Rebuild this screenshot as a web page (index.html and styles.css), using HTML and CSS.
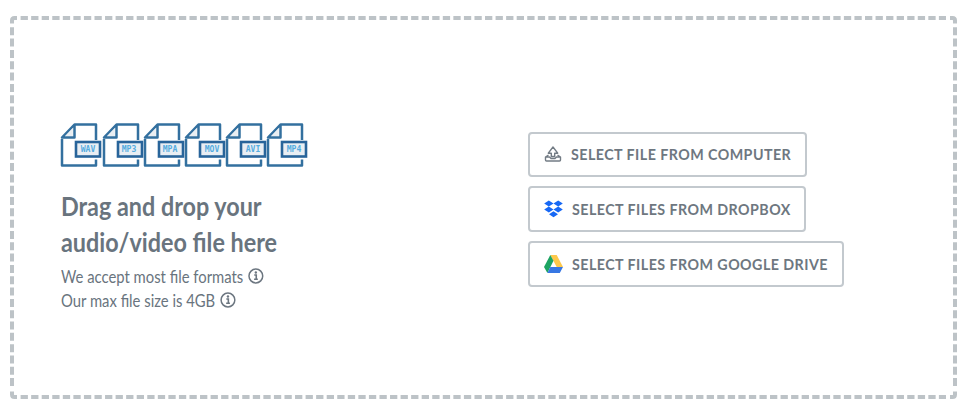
FILE: index.html
```html
<!DOCTYPE html>
<html lang="en">
<head>
<meta charset="utf-8">
<title>Upload</title>
<link rel="stylesheet" href="styles.css">
</head>
<body>
<svg width="0" height="0" class="defs">
  <symbol id="file" viewBox="0 0 42 46">
    <path d="M2 17V43.500H36V37.500M36 18V2.500H14.500L2 15.500H14.500V2.500" fill="none" stroke="#33709f" stroke-width="2.500" stroke-linejoin="round"/>
    <path d="M12.800 6.500V14H5.500Z" fill="#e9eef2"/>
    <rect x="16" y="20" width="24" height="14.500" fill="#e9eef3" stroke="#28649a" stroke-width="2.600"/>
  </symbol>
  <symbol id="info" viewBox="0 0 16 16">
    <circle cx="8" cy="8" r="6.900" fill="none" stroke="#6c7680" stroke-width="1.500"/>
    <path d="M6.400 7H8.400V11M6.200 11.300H10" fill="none" stroke="#6c7680" stroke-width="1.600"/>
    <circle cx="8" cy="4.500" r="1.200" fill="#6c7680"/>
  </symbol>
</svg>
<main class="dropzone">
  <svg class="outline" width="947" height="383" fill="none" stroke="#bdc3c7" stroke-width="4">
    <path d="M10.600 2H936" stroke-dasharray="7.300 3.255"/>
    <path d="M10.600 381H936" stroke-dasharray="7.300 3.255"/>
    <path d="M2 11.300V370.500" stroke-dasharray="8 3.316"/>
    <path d="M945 11.300V370.500" stroke-dasharray="8 3.316"/>
    <path d="M2 7.500V4.500Q2 2 4.500 2H7M940 2H942.500Q945 2 945 4.500V7.500M2 375.500V378.500Q2 381 4.500 381H7M940 381H942.500Q945 381 945 378.500V375.500"/>
  </svg>
  <section class="intro">
    <div class="formats">
      <div class="format"><svg><use href="#file"/></svg><span>WAV</span></div>
      <div class="format"><svg><use href="#file"/></svg><span>MP3</span></div>
      <div class="format"><svg><use href="#file"/></svg><span>MPA</span></div>
      <div class="format"><svg><use href="#file"/></svg><span>MOV</span></div>
      <div class="format"><svg><use href="#file"/></svg><span>AVI</span></div>
      <div class="format"><svg><use href="#file"/></svg><span>MP4</span></div>
    </div>
    <h1>Drag and drop your<br>audio/video file here</h1>
    <p>We accept most file formats <svg class="info"><use href="#info"/></svg></p>
    <p>Our max file size is 4GB <svg class="info"><use href="#info"/></svg></p>
  </section>
  <section class="sources">
    <button class="source computer">
      <svg width="18" height="16" viewBox="0 0 18 16" fill="none" stroke="#737c85" stroke-width="1.400" stroke-linejoin="round"><path d="M4.500 9L1.500 11V14Q1.500 15 2.500 15H15.500Q16.500 15 16.500 14V11L13.500 9M1.500 11H5.500L7 12.500H11L12.500 11H16.500M7.300 10.500V7.200H4.300L9 1L13.700 7.200H10.700V10.500Z"/></svg>
      <span>SELECT FILE FROM COMPUTER</span>
    </button>
    <button class="source dropbox">
      <svg width="19" height="18" viewBox="0 0 19 18" fill="#1768f5"><path d="M4.800 .500L9.500 3.500L4.800 6.500L.200 3.500ZM14.200 .500L18.800 3.500L14.200 6.500L9.500 3.500ZM4.800 6.500L9.500 9.500L4.800 12.500L.200 9.500ZM14.200 6.500L18.800 9.500L14.200 12.500L9.500 9.500ZM9.500 11.200L14 14.200L9.500 17.200L5 14.200Z"/></svg>
      <span>SELECT FILES FROM DROPBOX</span>
    </button>
    <button class="source drive">
      <svg width="19" height="18" viewBox="0 0 19 18"><path d="M6.300 0H12.700L19 12H12.700Z" fill="#fdc84b"/><path d="M6.300 0L9.500 5.800L3.400 18L0 12Z" fill="#1da462"/><path d="M6.300 12H19L15.800 18H3.400Z" fill="#3777e3"/></svg>
      <span>SELECT FILES FROM GOOGLE DRIVE</span>
    </button>
  </section>
</main>
</body>
</html>
```

FILE: styles.css
```css
* { box-sizing: border-box; }
body {
  margin: 0;
  background: #fff;
  color: #69747e;
  font-family: Lato, sans-serif;
}
.defs { position: absolute; }
.dropzone {
  position: relative;
  width: 947px;
  height: 383px;
  margin: 16px 0 0 10px;
  display: grid;
  grid-template-columns: 467px 1fr;
  padding-left: 51px;
}
.outline { position: absolute; inset: 0; }
.intro { padding-top: 106px; }
.formats { display: flex; }
.format { position: relative; width: 41.200px; height: 46px; }
.format svg { display: block; width: 42px; height: 46px; margin-left: -.600px; }
.format span {
  position: absolute;
  left: 15px;
  top: 19px;
  width: 24px;
  color: #55acdf;
  font: bold 9px/16px "DejaVu Sans Mono", monospace;
  text-align: center;
  transform: scaleX(.9);
}
h1 {
  margin: 20px 0 4px;
  font-size: 26px;
  line-height: 36px;
  font-weight: 700;
  white-space: nowrap;
  transform: scaleX(.898);
  transform-origin: left;
}
p {
  display: flex;
  align-items: center;
  gap: 4px;
  height: 24px;
  margin: 0;
  font-size: 17px;
  white-space: nowrap;
  transform: scaleX(.872);
  transform-origin: left;
}
.info { width: 18.300px; height: 16px; overflow: visible; }
.info use { width: 16px; height: 16px; transform: scaleX(1.143); }
.sources {
  display: flex;
  flex-direction: column;
  align-items: flex-start;
  gap: 9px;
  padding-top: 116px;
}
.source {
  display: flex;
  align-items: center;
  height: 46px;
  padding: 0 0 2px 14px;
  border: 2px solid #c3c9ce;
  border-radius: 4px;
  background: #fff;
  color: #6e7780;
  font: 700 16px Lato, sans-serif;
  letter-spacing: .500px;
  white-space: nowrap;
}
.source svg { flex: none; margin: 1px 9px 0 0; }
.source span {
  flex: none;
  transform: scaleX(.892);
  transform-origin: left;
}
.computer { width: 279px; height: 45px; }
.dropbox { width: 278px; }
.drive { width: 316px; }
```
